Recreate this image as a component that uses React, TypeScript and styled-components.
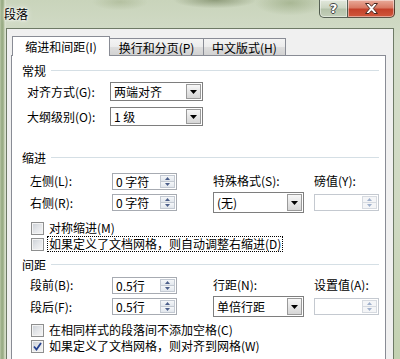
import React from 'react'
import styled, { createGlobalStyle } from 'styled-components'

const GlobalStyle = createGlobalStyle`
  html, body {
    margin: 0;
    padding: 0;
    overflow: hidden;
  }
  body {
    font-family: "Noto Sans CJK SC", "Noto Sans", sans-serif;
    font-size: 12px;
    color: #000;
  }
  * {
    box-sizing: border-box;
  }
`

const Frame = styled.div`
  width: 400px;
  height: 359px;
  overflow: hidden;
  display: flex;
  flex-direction: column;
  background:
    radial-gradient(60px 12px at 215px 0, rgba(95, 110, 70, 0.55), transparent 70%),
    radial-gradient(40px 12px at 120px 2px, rgba(140, 155, 110, 0.35), transparent 70%),
    radial-gradient(50px 18px at 290px 3px, rgba(120, 140, 90, 0.4), transparent 70%),
    linear-gradient(90deg, #b9c7a6 0, #93a77f 2px, #aebd99 4px, #dfe6d6 5px, transparent 6px),
    linear-gradient(180deg, #c9d4bb 0%, #d4ddca 12%, #cfd9c2 60%, #c3d1b1 100%);
`

const TitleBar = styled.div`
  height: 28px;
  flex-shrink: 0;
  display: flex;
  align-items: flex-start;
  padding: 0 5px 0 4px;
`

const Title = styled.span`
  margin-top: 6px;
  line-height: 16px;
  font-size: 12px;
  text-shadow: 0 0 6px #fff, 0 0 3px #fff, 0 0 2px #fff;
`

const CaptionButtons = styled.div`
  margin-left: auto;
  display: flex;
`

const CaptionButton = styled.div<{ $close?: boolean }>`
  width: ${({ $close }) => ($close ? 47 : 29)}px;
  height: 18px;
  display: flex;
  align-items: center;
  justify-content: center;
  border: 1px solid rgba(45, 55, 45, 0.75);
  border-top: none;
  ${({ $close }) => ($close ? 'border-left: none;' : '')}
  border-radius: ${({ $close }) => ($close ? '0 0 5px 0' : '0 0 0 5px')};
  box-shadow: inset 0 0 0 1px rgba(255, 255, 255, 0.45);
  background: ${({ $close }) =>
    $close
      ? 'linear-gradient(180deg, #e9ab9a 0%, #d97a64 45%, #c4412a 55%, #d0583c 100%)'
      : 'linear-gradient(180deg, #e2e8dc 0%, #ccd6c3 45%, #b5c3aa 55%, #c4cfba 100%)'};
`

const HelpGlyph = styled.span`
  font-family: "DejaVu Sans", sans-serif;
  font-weight: bold;
  font-size: 13px;
  line-height: 13px;
  color: #fff;
  text-shadow: 1px 0 #444, -1px 0 #444, 0 1px #444, 0 -1px #444;
`

const Client = styled.div`
  flex: 1;
  margin: 0 6px;
  display: flex;
  flex-direction: column;
  background: #f0f0f0;
  border: 1px solid #6e7a66;
  border-bottom: none;
  padding-top: 7px;
`

const TabStrip = styled.div`
  display: flex;
  align-items: flex-end;
  height: 20px;
  margin: 0 0 -1px 5px;
  position: relative;
  z-index: 1;
`

const Tab = styled.div<{ $active?: boolean; $w: number }>`
  width: ${({ $w }) => $w}px;
  height: ${({ $active }) => ($active ? 20 : 17)}px;
  margin-bottom: ${({ $active }) => ($active ? 0 : 1)}px;
  display: flex;
  align-items: center;
  justify-content: center;
  padding-top: ${({ $active }) => ($active ? 0 : 1)}px;
  border: 1px solid #898c95;
  border-bottom: none;
  white-space: nowrap;
  background: ${({ $active }) =>
    $active ? '#fff' : 'linear-gradient(180deg, #f4f4f4 0%, #ececec 50%, #dedede 51%, #d2d2d2 100%)'};
  & + & {
    margin-left: ${({ $active }) => ($active ? 0 : -1)}px;
  }
`

const Panel = styled.div`
  flex: 1;
  margin: 0 7px 0 4px;
  background: #fff;
  border: 1px solid #898c95;
  border-bottom: none;
  padding: 8px 6px 0 10px;
`

const SectionHeader = styled.div<{ $mt: number }>`
  display: flex;
  align-items: center;
  gap: 5px;
  height: 14px;
  line-height: 14px;
  margin-top: ${({ $mt }) => $mt}px;

  &::after {
    content: '';
    flex: 1;
    height: 1px;
    margin-top: -1px;
    background: #d5dfe5;
  }
`

const GeneralGrid = styled.div`
  display: grid;
  grid-template-columns: 83px 93px;
  grid-auto-rows: 19px;
  row-gap: 6px;
  align-items: center;
  margin-top: 4px;
  padding-left: 5px;
`

const MeasureGrid = styled.div`
  display: grid;
  grid-template-columns: 82px 101px 101px 65px;
  grid-template-rows: 18px 21px;
  row-gap: 2px;
  align-items: center;
  margin-top: ${({ $mt }: { $mt: number }) => $mt}px;
  padding-left: 8px;
`

const Label = styled.span`
  white-space: nowrap;
  line-height: 14px;
`

const SelectBox = styled.div<{ $w: number; $h: number }>`
  width: ${({ $w }) => $w}px;
  height: ${({ $h }) => $h}px;
  display: flex;
  align-items: stretch;
  border: 1px solid #7e7e7e;
  padding: 1px;
  background: #fff;
`

const SelectValue = styled.span`
  flex: 1;
  display: flex;
  align-items: center;
  padding-left: 2px;
  white-space: nowrap;
`

const DropButton = styled.span`
  width: 15px;
  display: flex;
  align-items: center;
  justify-content: center;
  border: 1px solid #9a9a9a;
  background: linear-gradient(180deg, #f7f7f7 0%, #e6e6e6 50%, #d6d6d6 100%);
`

const SpinBox = styled.div<{ $disabled?: boolean }>`
  width: 65px;
  height: 17px;
  display: flex;
  align-items: stretch;
  border: 1px solid ${({ $disabled }) => ($disabled ? '#c4c9d0' : '#a7abb2')};
  padding: 1px;
  background: #fff;
`

const SpinValue = styled.span`
  flex: 1;
  display: flex;
  align-items: center;
  padding-left: 2px;
  white-space: nowrap;
`

const SpinButtons = styled.span`
  width: 15px;
  display: flex;
  flex-direction: column;
`

const SpinHalf = styled.span<{ $disabled?: boolean }>`
  flex: 1;
  display: flex;
  align-items: center;
  justify-content: center;
  border: 1px solid ${({ $disabled }) => ($disabled ? '#d6dae0' : '#c3c9d2')};
  background: ${({ $disabled }) =>
    $disabled ? '#f4f5f7' : 'linear-gradient(180deg, #f5f7f9 0%, #e2e7ed 100%)'};
  & + & {
    border-top: none;
  }
`

const CheckList = styled.div<{ $mt: number }>`
  display: flex;
  flex-direction: column;
  margin-top: ${({ $mt }) => $mt}px;
  padding-left: 9px;
`

const CheckRow = styled.div`
  height: 16px;
  display: flex;
  align-items: center;
  gap: 3px;
`

const CheckBox = styled.span`
  width: 13px;
  height: 13px;
  flex-shrink: 0;
  display: flex;
  align-items: center;
  justify-content: center;
  border: 1px solid #8e8f8f;
  box-shadow: inset 0 0 0 1px #f4f4f4;
  background: linear-gradient(135deg, #c9ced4 0%, #e4e6e9 50%, #f6f6f6 100%);
`

const CheckText = styled.span<{ $focus?: boolean }>`
  line-height: 14px;
  padding: 0 1px;
  white-space: nowrap;
  border: 1px dotted ${({ $focus }) => ($focus ? '#000' : 'transparent')};
`

function DownArrow() {
  return (
    <svg width="7" height="4" viewBox="0 0 7 4">
      <path d="M0 0H7L3.5 4Z" fill="#000" />
    </svg>
  )
}

function SpinArrow({ up, disabled }: { up?: boolean; disabled?: boolean }) {
  return (
    <svg width="5" height="3" viewBox="0 0 5 3">
      <path d={up ? 'M0 3H5L2.5 0Z' : 'M0 0H5L2.5 3Z'} fill={disabled ? '#9fb0cc' : '#4c5f8a'} />
    </svg>
  )
}

function Select({ value, w, h }: { value: string; w: number; h: number }) {
  return (
    <SelectBox $w={w} $h={h}>
      <SelectValue>{value}</SelectValue>
      <DropButton>
        <DownArrow />
      </DropButton>
    </SelectBox>
  )
}

function Spin({ value, disabled }: { value?: string; disabled?: boolean }) {
  return (
    <SpinBox $disabled={disabled}>
      <SpinValue>{value}</SpinValue>
      <SpinButtons>
        <SpinHalf $disabled={disabled}>
          <SpinArrow up disabled={disabled} />
        </SpinHalf>
        <SpinHalf $disabled={disabled}>
          <SpinArrow disabled={disabled} />
        </SpinHalf>
      </SpinButtons>
    </SpinBox>
  )
}

function Check({ label, checked, focus }: { label: string; checked?: boolean; focus?: boolean }) {
  return (
    <CheckRow>
      <CheckBox>
        {checked && (
          <svg width="9" height="9" viewBox="0 0 9 9">
            <path d="M1 4.5L3.5 7.5L8 1" fill="none" stroke="#24418f" strokeWidth="1.8" />
          </svg>
        )}
      </CheckBox>
      <CheckText $focus={focus}>{label}</CheckText>
    </CheckRow>
  )
}

export default function App() {
  return (
    <>
      <GlobalStyle />
      <Frame>
        <TitleBar>
          <Title>段落</Title>
          <CaptionButtons>
            <CaptionButton>
              <HelpGlyph>?</HelpGlyph>
            </CaptionButton>
            <CaptionButton $close>
              <svg width="13" height="11" viewBox="0 0 13 11">
                <path
                  d="M0.5 0.5H4L6.5 3.3L9 0.5H12.5L8.3 5.5L12.5 10.5H9L6.5 7.7L4 10.5H0.5L4.7 5.5Z"
                  fill="#fff"
                  stroke="#4a2a22"
                  strokeWidth="1"
                />
              </svg>
            </CaptionButton>
          </CaptionButtons>
        </TitleBar>

        <Client>
          <TabStrip>
            <Tab $active $w={98}>缩进和间距(I)</Tab>
            <Tab $w={95}>换行和分页(P)</Tab>
            <Tab $w={83}>中文版式(H)</Tab>
          </TabStrip>

          <Panel>
            <SectionHeader $mt={0}>常规</SectionHeader>
            <GeneralGrid>
              <Label>对齐方式(G):</Label>
              <Select value="两端对齐" w={93} h={19} />
              <Label>大纲级别(O):</Label>
              <Select value="1 级" w={93} h={19} />
            </GeneralGrid>

            <SectionHeader $mt={25}>缩进</SectionHeader>
            <MeasureGrid $mt={7}>
              <Label>左侧(L):</Label>
              <Spin value="0 字符" />
              <Label>特殊格式(S):</Label>
              <Label>磅值(Y):</Label>
              <Label>右侧(R):</Label>
              <Spin value="0 字符" />
              <Select value="(无)" w={91} h={21} />
              <Spin disabled />
            </MeasureGrid>
            <CheckList $mt={7}>
              <Check label="对称缩进(M)" />
              <Check label="如果定义了文档网格，则自动调整右缩进(D)" focus />
            </CheckList>

            <SectionHeader $mt={6}>间距</SectionHeader>
            <MeasureGrid $mt={4}>
              <Label>段前(B):</Label>
              <Spin value="0.5行" />
              <Label>行距(N):</Label>
              <Label>设置值(A):</Label>
              <Label>段后(F):</Label>
              <Spin value="0.5行" />
              <Select value="单倍行距" w={91} h={21} />
              <Spin disabled />
            </MeasureGrid>
            <CheckList $mt={5}>
              <Check label="在相同样式的段落间不添加空格(C)" />
              <Check label="如果定义了文档网格，则对齐到网格(W)" checked />
            </CheckList>
          </Panel>
        </Client>
      </Frame>
    </>
  )
}
